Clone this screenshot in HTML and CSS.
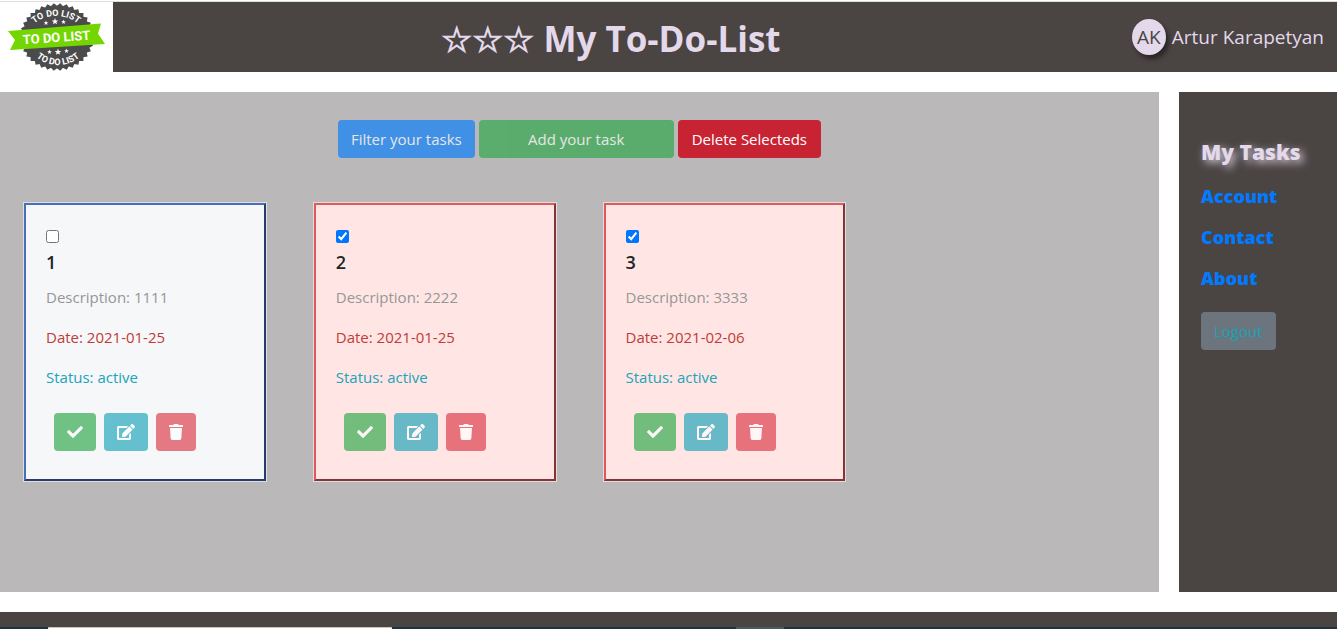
FILE: index.html
```html
<!DOCTYPE html>
<html lang="en">
<head>
<meta charset="utf-8">
<title>My To-Do-List</title>
<link rel="stylesheet" href="styles.css">
</head>
<body>
<svg class="sprite" aria-hidden="true">
  <symbol id="check" viewBox="0 0 512 512"><path d="M173.898 439.404l-166.4-166.4c-9.997-9.997-9.997-26.206 0-36.204l36.203-36.204c9.997-9.998 26.207-9.998 36.204 0L192 312.69 432.095 72.596c9.997-9.997 26.207-9.997 36.204 0l36.203 36.204c9.997 9.997 9.997 26.206 0 36.204l-294.4 294.401c-9.998 9.997-26.207 9.997-36.204-.001z"/></symbol>
  <symbol id="edit" viewBox="0 0 576 512"><path d="M402.6 83.2l90.2 90.2c3.8 3.8 3.8 10 0 13.8L274.4 405.6l-92.8 10.3c-12.4 1.4-22.9-9.1-21.5-21.5l10.3-92.8L388.8 83.2c3.8-3.8 10-3.8 13.8 0zm162-22.9l-48.8-48.8c-15.2-15.2-39.9-15.2-55.2 0l-35.4 35.4c-3.8 3.8-3.8 10 0 13.8l90.2 90.2c3.8 3.8 10 3.8 13.8 0l35.4-35.4c15.2-15.3 15.2-40 0-55.2zM384 346.2V448H64V128h229.8c3.2 0 6.2-1.3 8.5-3.5l40-40c7.6-7.6 2.2-20.5-8.5-20.5H48C21.5 64 0 85.5 0 112v352c0 26.5 21.5 48 48 48h352c26.500 0 48-21.500 48-48V306.200c0-10.700-12.900-16-20.500-8.500l-40 40c-2.200 2.300-3.500 5.300-3.500 8.500z"/></symbol>
  <symbol id="trash" viewBox="0 0 448 512"><path d="M432 32H312l-9.4-18.700A24 24 0 0 0 281.100 0H166.800a23.720 23.720 0 0 0-21.400 13.300L136 32H16A16 16 0 0 0 0 48v32a16 16 0 0 0 16 16h416a16 16 0 0 0 16-16V48a16 16 0 0 0-16-16zM53.200 467a48 48 0 0 0 47.900 45h245.800a48 48 0 0 0 47.900-45L416 128H32z"/></symbol>
  <symbol id="star" viewBox="-10 -10 20 20"><path d="M0-10 2.600-3.200 9.500-3.100 4 1.200 5.900 8.100 0 4.200-5.900 8.100-4 1.200-9.500-3.100-2.600-3.200z"/></symbol>
</svg>

<header class="header">
  <svg class="logo" viewBox="0 0 113 70" role="img" aria-label="To do list">
    <defs>
      <rect id="tooth" x="-24" y="-24" width="48" height="48"/>
      <path id="arc-top" d="M28 35A28 21 0 0 1 84 35"/>
      <path id="arc-bottom" d="M26 33A32 30 0 0 0 90 33"/>
    </defs>
    <g fill="#4b4b4b" transform="translate(57 35) scale(1.100 1)">
      <use href="#tooth"/><use href="#tooth" transform="rotate(10)"/><use href="#tooth" transform="rotate(20)"/>
      <use href="#tooth" transform="rotate(30)"/><use href="#tooth" transform="rotate(40)"/><use href="#tooth" transform="rotate(50)"/>
      <use href="#tooth" transform="rotate(60)"/><use href="#tooth" transform="rotate(70)"/><use href="#tooth" transform="rotate(80)"/>
    </g>
    <g class="logo-small">
      <text><textPath href="#arc-top" startOffset="50%" text-anchor="middle">TO DO LIST</textPath></text>
      <text><textPath href="#arc-bottom" startOffset="50%" text-anchor="middle">TO DO LIST</textPath></text>
    </g>
    <g fill="#fff">
      <use href="#star" x="43.500" y="18.500" width="5" height="5"/><use href="#star" x="51.500" y="16" width="7" height="7"/><use href="#star" x="61" y="17.500" width="5" height="5"/>
      <use href="#star" x="47" y="47.500" width="5" height="5"/><use href="#star" x="54.500" y="46.500" width="7" height="7"/><use href="#star" x="64" y="46.500" width="5" height="5"/>
    </g>
    <path fill="#74d600" d="M8 29 101 21.500 98 31.500 105 42 10 48 15 38z"/>
    <text class="logo-main" x="56.500" y="40" text-anchor="middle" transform="rotate(-4 56 35)">TO DO LIST</text>
  </svg>
  <h1 class="title">☆☆☆ My To-Do-List</h1>
  <div class="user"><span class="avatar">AK</span><span>Artur Karapetyan</span></div>
</header>

<div class="content">
  <main class="board">
    <div class="toolbar">
      <button class="btn primary faded">Filter your tasks</button>
      <button class="btn success faded wide">Add your task</button>
      <button class="btn danger">Delete Selecteds</button>
    </div>
    <div class="cards">
      <article class="card">
        <div class="pick"><input type="checkbox" aria-label="Select task 1"></div>
        <h2 class="name">1</h2>
        <p class="description">Description: 1111</p>
        <p class="date">Date: 2021-01-25</p>
        <p class="status">Status: active</p>
        <div class="actions">
          <button class="btn icon success faded" aria-label="Done"><svg width="16" height="16"><use href="#check"/></svg></button>
          <button class="btn icon info faded" aria-label="Edit"><svg width="18" height="16"><use href="#edit"/></svg></button>
          <button class="btn icon delete faded" aria-label="Delete"><svg width="14" height="16"><use href="#trash"/></svg></button>
        </div>
      </article>
      <article class="card selected">
        <div class="pick"><input type="checkbox" aria-label="Select task 2" checked></div>
        <h2 class="name">2</h2>
        <p class="description">Description: 2222</p>
        <p class="date">Date: 2021-01-25</p>
        <p class="status">Status: active</p>
        <div class="actions">
          <button class="btn icon success faded" aria-label="Done"><svg width="16" height="16"><use href="#check"/></svg></button>
          <button class="btn icon info faded" aria-label="Edit"><svg width="18" height="16"><use href="#edit"/></svg></button>
          <button class="btn icon delete faded" aria-label="Delete"><svg width="14" height="16"><use href="#trash"/></svg></button>
        </div>
      </article>
      <article class="card selected">
        <div class="pick"><input type="checkbox" aria-label="Select task 3" checked></div>
        <h2 class="name">3</h2>
        <p class="description">Description: 3333</p>
        <p class="date">Date: 2021-02-06</p>
        <p class="status">Status: active</p>
        <div class="actions">
          <button class="btn icon success faded" aria-label="Done"><svg width="16" height="16"><use href="#check"/></svg></button>
          <button class="btn icon info faded" aria-label="Edit"><svg width="18" height="16"><use href="#edit"/></svg></button>
          <button class="btn icon delete faded" aria-label="Delete"><svg width="14" height="16"><use href="#trash"/></svg></button>
        </div>
      </article>
    </div>
  </main>
  <nav class="sidebar">
    <a class="link current" href="#">My Tasks</a>
    <a class="link" href="#">Account</a>
    <a class="link" href="#">Contact</a>
    <a class="link" href="#">About</a>
    <button class="btn logout">Logout</button>
  </nav>
</div>

<footer class="footer"></footer>
<div class="taskbar"><span class="search"></span><span class="app"></span></div>
</body>
</html>
```
FILE: styles.css
```css
* { box-sizing: border-box; }

body {
  margin: 0;
  min-height: 100vh;
  display: flex;
  flex-direction: column;
  background: #fff;
  color: #212529;
  font: 15px/24px "Open Sans", "Noto Sans", sans-serif;
}

.sprite { display: none; }

.header {
  display: flex;
  align-items: center;
  margin-top: 1px;
  border-top: 1px solid #dadcde;
  background: #4a4443;
  color: #e3d9ea;
}

.logo { width: 113px; height: 70px; background: #fff; flex: none; }
.logo-small { fill: #fff; font: bold 9px "Roboto", sans-serif; }
.logo-main { fill: #fff; font: bold 13px "Roboto", sans-serif; }

.title {
  flex: 1;
  margin: 0;
  padding-top: 4px;
  text-align: center;
  font-size: 35px;
  line-height: 44px;
  white-space: nowrap;
}

.user {
  display: flex;
  align-items: center;
  gap: 6px;
  padding: 0 13px 0 23px;
  font-size: 19px;
  white-space: nowrap;
}

.avatar {
  width: 34px;
  height: 36px;
  border-radius: 50%;
  background: #e3d9ea;
  color: #4a4443;
  line-height: 36px;
  text-align: center;
  box-shadow: 3px 4px 4px #2b2727;
}

.content {
  flex: 1;
  display: flex;
  gap: 20px;
  margin: 20px 0;
}

.board { flex: 1; padding: 28px 24px 24px; background: #bab8b8; }

.toolbar { display: flex; justify-content: center; gap: 4px; margin-bottom: 45px; }

.btn {
  height: 38px;
  padding: 0 13px;
  border: 0;
  border-radius: 4px;
  color: #fff;
  font: inherit;
  white-space: nowrap;
}
.faded { opacity: 0.65; }
.wide { width: 195px; }
.primary { background: #007bff; }
.success { background: #28a745; }
.info { background: #17a2b8; }
.danger { padding: 0 14px; background: #c82333; }
.delete { background: #dc3545; }
.icon { display: flex; align-items: center; }
.icon svg { fill: currentColor; }

.cards { display: grid; grid-template-columns: repeat(4, 1fr); gap: 48px; }

.card {
  padding: 20px;
  border: 2px solid;
  border-color: #4a6fb9 #263c6c #263c6c #4a6fb9;
  background: #f5f7f9;
  box-shadow: 0 0 0 1px #dfdddd;
}
.card.selected {
  border-color: #dc5a5e #863337 #863337 #dc5a5e;
  background: #ffe6e5;
}

.pick { display: flex; align-items: flex-start; height: 25px; padding-top: 5px; }
.pick input { margin: 0; width: 13px; height: 13px; }
.name { margin: 0 0 11px; font-size: 18px; line-height: 24px; font-weight: 600; }
.card p { margin: 0 0 16px; }
.description { color: #969696; }
.date { color: #c23a36; }
.status { color: #21a3b8; }
.actions { display: flex; gap: 8px; padding: 8px; }

.sidebar {
  flex: none;
  width: 158px;
  display: flex;
  flex-direction: column;
  align-items: flex-start;
  gap: 17px;
  padding: 44px 22px;
  background: #4a4443;
}
.link {
  color: #007bff;
  font-size: 18px;
  font-weight: 800;
  text-decoration: none;
  white-space: nowrap;
}
.link.current {
  margin-bottom: 3px;
  padding-top: 4px;
  color: #e3d9ea;
  font-size: 21px;
  text-shadow: 3px 3px 8px #e3d9ea;
}
.logout { margin-top: 5px; background: #6c757d; color: #17a2b8; }

.footer { height: 15px; background: #4a4443; }

.taskbar { display: flex; gap: 344px; height: 2px; padding-left: 48px; background: #203340; }
.search { width: 344px; border: 1px solid #c9c4c4; border-bottom-color: #fff; }
.app { width: 48px; background: #4b5b66; }
```
